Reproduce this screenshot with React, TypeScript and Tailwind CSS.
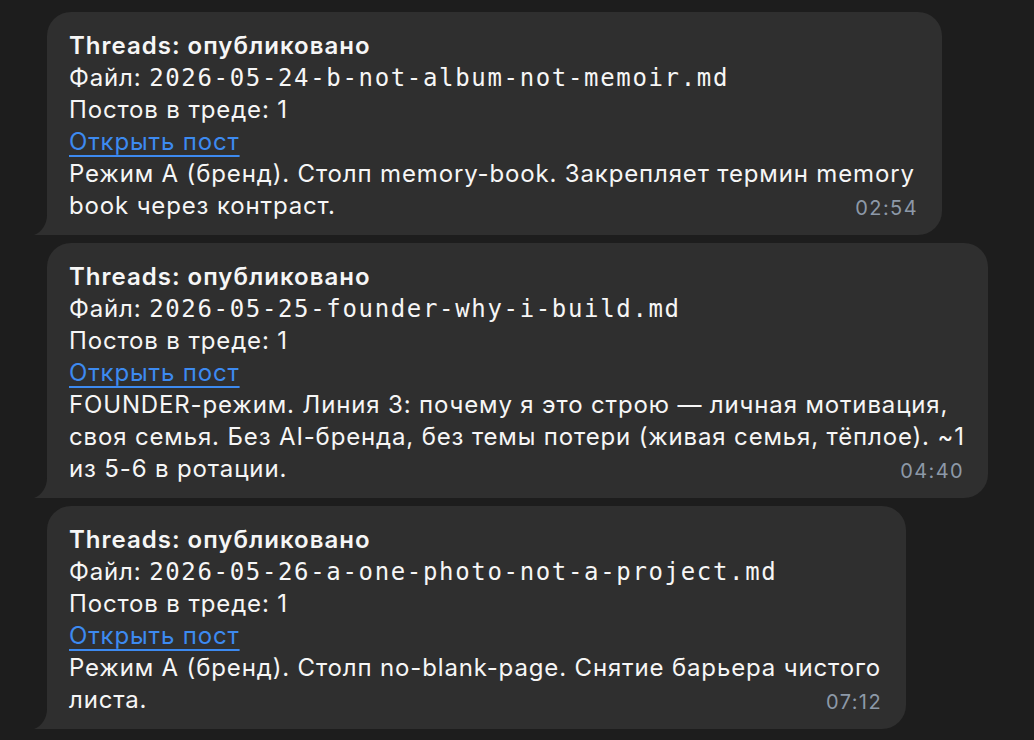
import React from "react";

type Msg = {
  file: string;
  lines: string[];
  time: string;
  width: string;
};

const messages: Msg[] = [
  {
    file: "2026-05-24-b-not-album-not-memoir.md",
    lines: [
      "Режим А (бренд). Столп memory-book. Закрепляет термин memory",
      "book через контраст.",
    ],
    time: "02:54",
    width: "w-[895px]",
  },
  {
    file: "2026-05-25-founder-why-i-build.md",
    lines: [
      "FOUNDER-режим. Линия 3: почему я это строю — личная мотивация,",
      "своя семья. Без AI-бренда, без темы потери (живая семья, тёплое). ~1",
      "из 5-6 в ротации.",
    ],
    time: "04:40",
    width: "w-[941px]",
  },
  {
    file: "2026-05-26-a-one-photo-not-a-project.md",
    lines: [
      "Режим А (бренд). Столп no-blank-page. Снятие барьера чистого",
      "листа.",
    ],
    time: "07:12",
    width: "w-[859px]",
  },
];

const Tail = () => (
  <svg
    className="absolute bottom-0 -left-[13px]"
    width="24"
    height="20"
    viewBox="0 0 24 20"
  >
    <path d="M13 0 C13 9 8 17 0 20 L24 20 L24 0 Z" fill="#2f2f2f" />
  </svg>
);

const Bubble = ({ m }: { m: Msg }) => (
  <div
    className={`relative ${m.width} rounded-[24px] rounded-bl-none bg-[#2f2f2f] pl-[22px] pr-6 pt-[18px] pb-[13px] text-[24px] leading-[32px] tracking-[0.85px] text-[#f6f6f6]`}
  >
    <Tail />
    <div className="font-semibold tracking-[1px]">Threads: опубликовано</div>
    <div className="whitespace-nowrap">
      Файл:{" "}
      <span className="font-['DejaVu_Sans_Mono',monospace] text-[24px] tracking-[1.66px]">
        {m.file}
      </span>
    </div>
    <div>Постов в треде: 1</div>
    <div>
      <a href="#" className="text-[#3d8af0] underline underline-offset-[5px] decoration-[1.5px]">
        Открыть пост
      </a>
    </div>
    {m.lines.map((l, i) => (
      <div key={i} className="flex items-end justify-between whitespace-nowrap">
        <span>{l}</span>
        {i === m.lines.length - 1 && (
          <span className="text-[20px] leading-[28px] tracking-[1.4px] text-[#8d99a8]">
            {m.time}
          </span>
        )}
      </div>
    ))}
  </div>
);

export default function App() {
  return (
    <div className="min-h-screen w-full bg-[#1d1d1d] pl-[47px] pt-3 font-['Inter',sans-serif] antialiased">
      <div className="flex flex-col gap-2">
        {messages.map((m) => (
          <Bubble key={m.time} m={m} />
        ))}
      </div>
    </div>
  );
}
